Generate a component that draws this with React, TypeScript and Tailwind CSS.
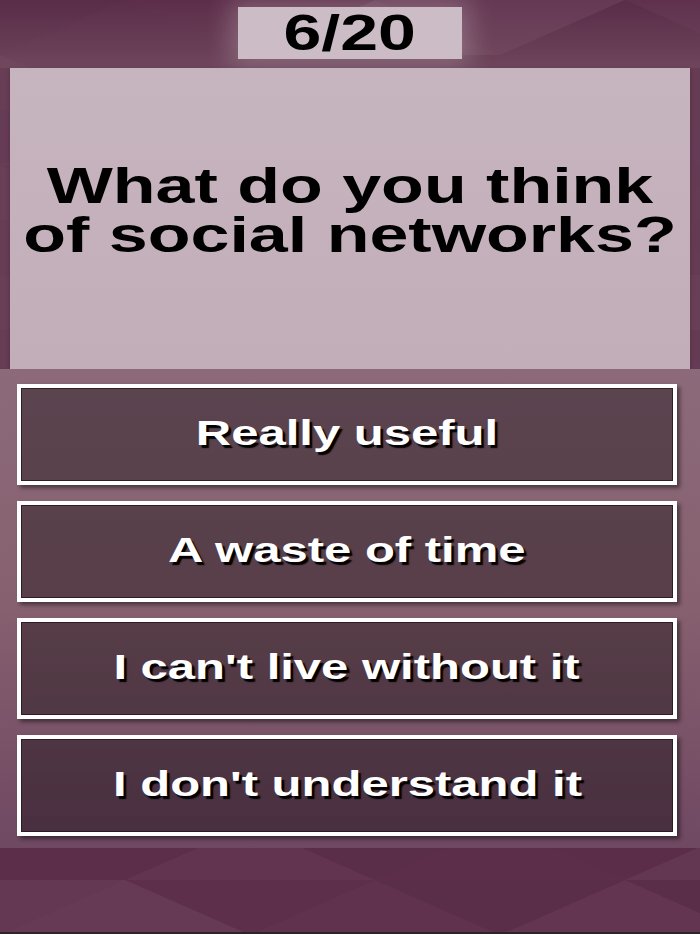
import React from 'react';

const answers = ['Really useful', 'A waste of time', "I can't live without it", "I don't understand it"];

// deterministic pseudo-random shade per triangle
function shade(r: number, i: number, k: number) {
  const v = Math.sin(r * 12.9898 + i * 78.233 + k * 37.719) * 43758.5453;
  return v - Math.floor(v);
}

function LowPoly() {
  const w = 250;
  const h = 55;
  const tris: React.ReactNode[] = [];
  for (let r = 0; r < 18; r++) {
    const y = r * h;
    const off = r % 2 === 0 ? 0 : -w / 2;
    for (let i = -1; i < 5; i++) {
      const x = i * w + off;
      const a = shade(r, i, 1);
      const b = shade(r, i, 2);
      tris.push(
        <polygon key={`u${r}-${i}`} points={`${x},${y + h} ${x + w / 2},${y} ${x + w},${y + h}`}
          fill={a > 0.5 ? '#ffffff' : '#000000'} fillOpacity={a > 0.5 ? (a - 0.5) * 0.12 : a * 0.1} />
      );
      tris.push(
        <polygon key={`d${r}-${i}`} points={`${x + w / 2},${y} ${x + w * 1.5},${y} ${x + w},${y + h}`}
          fill={b > 0.5 ? '#ffffff' : '#000000'} fillOpacity={b > 0.5 ? (b - 0.5) * 0.12 : b * 0.1} />
      );
    }
  }
  return (
    <svg className="absolute inset-0 h-full w-full" viewBox="0 0 700 934" preserveAspectRatio="none">
      {tris}
    </svg>
  );
}

export default function App() {
  return (
    <div className="relative flex min-h-screen w-full flex-col overflow-hidden bg-[#5e2f4b] font-['Liberation_Sans',Arial,sans-serif]">
      <LowPoly />

      <div className="relative flex flex-col">
        {/* counter */}
        <div className="flex h-[68px] items-start justify-center bg-gradient-to-b from-transparent to-[#7a5568]/60 pt-[7px]">
          <div className="flex h-[52px] w-[224px] items-center justify-center bg-[#cbbcc5] shadow-[0_0_26px_8px_rgba(255,255,255,0.22)]">
            <span className="scale-x-[1.36] text-[50px] font-bold leading-none text-black">6/20</span>
          </div>
        </div>

        {/* question */}
        <div className="bg-[#6b425a]/70 px-[10px]">
          <div className="flex h-[301px] flex-col items-center justify-center bg-gradient-to-b from-[#c6b4bf] to-[#c2aeb9] pb-[16px] shadow-[0_2px_4px_rgba(0,0,0,0.25)]">
            <div className="w-full scale-x-[1.4] text-center text-[50px] font-bold leading-[49px] text-black">
              <div>What do you think</div>
              <div>of social networks?</div>
            </div>
          </div>
        </div>

        {/* answers */}
        <div className="bg-gradient-to-b from-[#8c6a7a] via-[#86606f] to-[#6f4862] pb-[12px] pt-[15px]">
          <div className="ml-[17px] flex w-[660px] flex-col gap-[16px]">
            {answers.map(a => (
              <div key={a}
                className="flex h-[101px] items-center justify-center border-4 border-white bg-black/35 pb-[5px] shadow-[inset_0_0_0_1px_rgba(40,20,30,0.8),3px_3px_4px_rgba(0,0,0,0.45)]">
                <span className="scale-x-[1.4] text-[35px] font-bold leading-none text-white [text-shadow:2px_3px_1px_#000]">{a}</span>
              </div>
            ))}
          </div>
        </div>
      </div>

      <div className="relative flex-1" />
      <div className="relative h-[2px] bg-[#2b2528]" />
    </div>
  );
}
